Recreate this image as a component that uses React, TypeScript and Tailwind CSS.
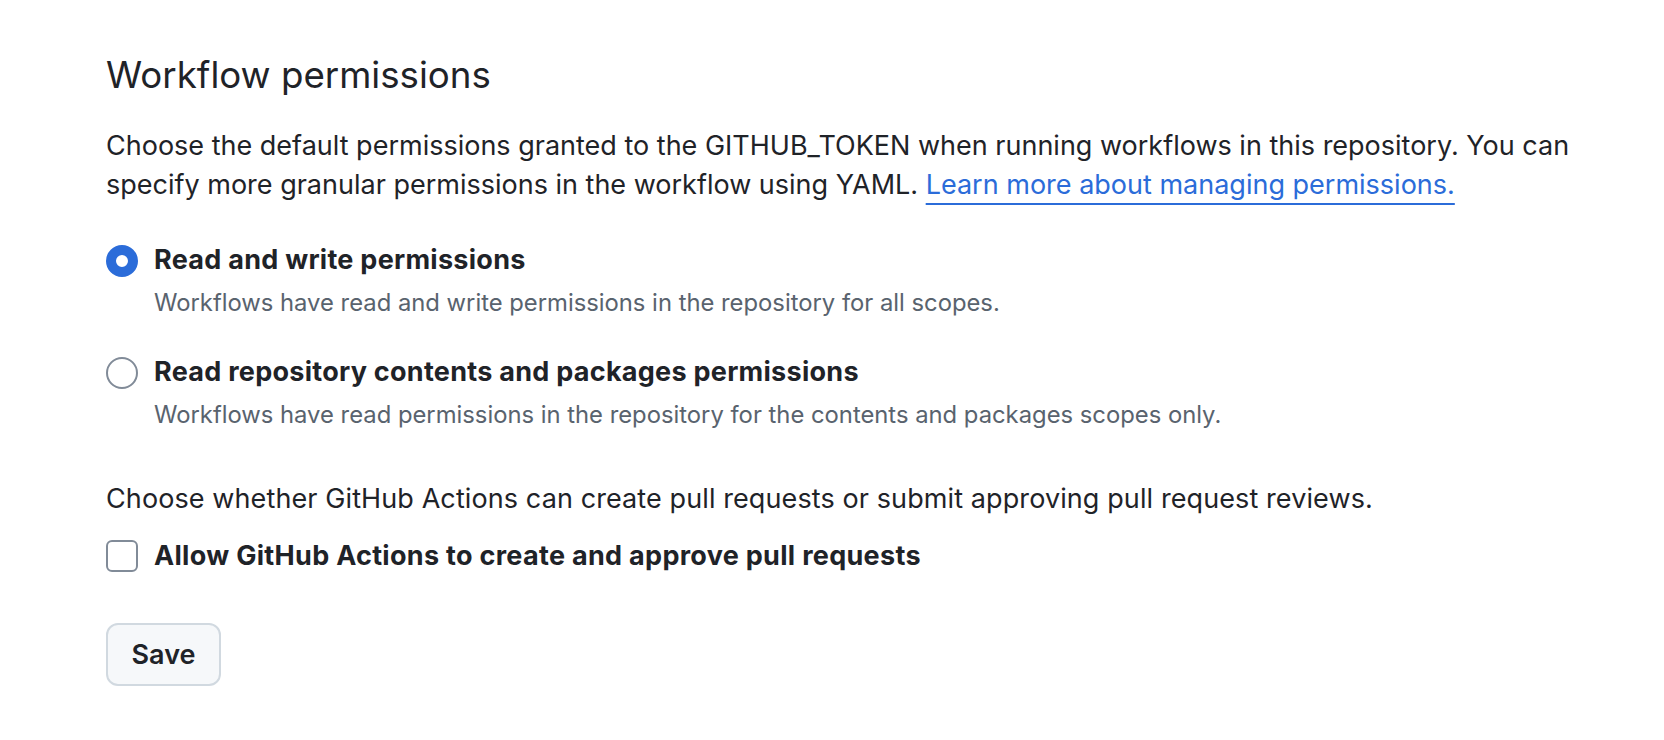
import React, { useState } from "react";

type Option = { id: string; title: string; desc: string };

const options: Option[] = [
  {
    id: "write",
    title: "Read and write permissions",
    desc: "Workflows have read and write permissions in the repository for all scopes.",
  },
  {
    id: "read",
    title: "Read repository contents and packages permissions",
    desc: "Workflows have read permissions in the repository for the contents and packages scopes only.",
  },
];

function Radio({ checked }: { checked: boolean }) {
  return checked ? (
    <span className="mt-[1px] block h-[32px] w-[32px] shrink-0 rounded-full border-[10px] border-[#2b6cd9] bg-white"></span>
  ) : (
    <span className="mt-[1px] block h-[32px] w-[32px] shrink-0 rounded-full border-2 border-[#818b98] bg-white"></span>
  );
}

export default function App() {
  const [perm, setPerm] = useState("write");
  const [allow, setAllow] = useState(false);

  return (
    <div className="min-h-screen bg-white px-[106px] pt-[52px] font-['Inter','Noto_Sans',sans-serif] text-[#1f2328]">
      <h2 className="text-[36.7px] leading-[45px] font-normal">
        Workflow permissions
      </h2>
      <p className="mt-[29px] w-[1520px] text-[27px] leading-[39px]">
        Choose the default permissions granted to the GITHUB_TOKEN when running
        workflows in this repository. You can specify more granular permissions
        in the workflow using YAML.{" "}
        <a
          href="#"
          className="text-[#2b6cd9] underline decoration-[2px] underline-offset-[9px]"
        >
          Learn more about managing permissions.
        </a>
      </p>

      <div className="mt-[40px] flex flex-col gap-[38px]">
        {options.map((o) => (
          <label
            key={o.id}
            className="flex cursor-pointer items-start gap-[16px]"
            onClick={() => setPerm(o.id)}
          >
            <Radio checked={perm === o.id} />
            <div>
              <div className="text-[27px] leading-[32px] font-bold tracking-[0.27px]">
                {o.title}
              </div>
              <div className="mt-[12px] text-[23.8px] leading-[30px] text-[#59636e]">
                {o.desc}
              </div>
            </div>
          </label>
        ))}
      </div>

      <p className="mt-[50px] text-[27px] leading-[38px] tracking-[0.1px]">
        Choose whether GitHub Actions can create pull requests or submit
        approving pull request reviews.
      </p>
      <label
        className="mt-[22px] flex cursor-pointer items-center gap-[16px]"
        onClick={() => setAllow(!allow)}
      >
        <span
          className={
            allow
              ? "block h-[32px] w-[32px] shrink-0 rounded-[6px] border-2 border-[#2b6cd9] bg-[#2b6cd9]"
              : "block h-[32px] w-[32px] shrink-0 rounded-[6px] border-2 border-[#818b98] bg-white"
          }
        ></span>
        <span className="text-[27px] leading-[32px] font-bold tracking-[0.3px]">
          Allow GitHub Actions to create and approve pull requests
        </span>
      </label>

      <button className="mt-[51px] h-[63px] w-[115px] rounded-[12px] border-2 border-[#d1d9e0] bg-[#f6f8fa] pt-[2px] text-[27px] font-semibold text-[#1f2328]">
        Save
      </button>
    </div>
  );
}
